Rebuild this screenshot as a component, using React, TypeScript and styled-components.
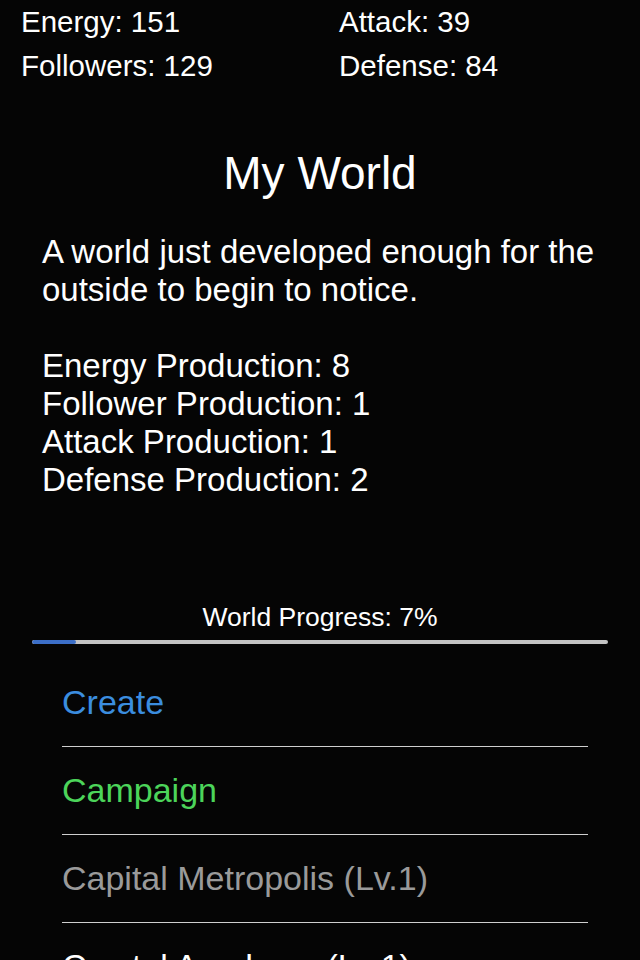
import React from "react";
import styled, { createGlobalStyle } from "styled-components";

const Global = createGlobalStyle`
  html, body {
    margin: 0;
    padding: 0;
    background: #050505;
  }
  body {
    font-family: "Liberation Sans", Arial, Helvetica, sans-serif;
    color: #ffffff;
    -webkit-font-smoothing: antialiased;
  }
`;

const Screen = styled.div`
  width: 640px;
  height: 960px;
  overflow: hidden;
  background: #050505;
  display: flex;
  flex-direction: column;
  & > * {
    flex-shrink: 0;
  }
`;

const StatsGrid = styled.div`
  display: grid;
  grid-template-columns: 318px 1fr;
  padding: 0 21px;
`;

const Stat = styled.div`
  font-size: 29.5px;
  line-height: 44px;
  color: #ffffff;
  white-space: nowrap;
`;

const Title = styled.h1`
  margin: 57px 0 0;
  font-size: 46px;
  font-weight: 400;
  line-height: 56px;
  text-align: center;
  color: #ffffff;
`;

const Body = styled.div`
  margin-top: 32px;
  padding: 0 24px 0 42px;
  font-size: 33px;
  line-height: 38px;
`;

const Paragraph = styled.p`
  margin: 0;
`;

const ProductionList = styled.div`
  margin-top: 38px;
  display: flex;
  flex-direction: column;
`;

const ProgressLabel = styled.div`
  margin-top: 103px;
  font-size: 26.5px;
  line-height: 30px;
  text-align: center;
`;

const Track = styled.div`
  margin: 8px 32px 0;
  height: 4px;
  border-radius: 2px;
  background: #c4c4c4;
  overflow: hidden;
`;

const Fill = styled.div`
  height: 100%;
  border-radius: 2px;
  background: #3c6fc8;
`;

const Menu = styled.div`
  margin-top: 15px;
  padding: 0 52px 0 62px;
  display: flex;
  flex-direction: column;
`;

const MenuRow = styled.div<{ $color: string; $last?: boolean }>`
  flex-shrink: 0;
  height: 87px;
  line-height: 87px;
  font-size: 34px;
  color: ${(p) => p.$color};
  border-bottom: ${(p) => (p.$last ? "none" : "1px solid #cfcfcf")};
  white-space: nowrap;
`;

const stats = [
  "Energy: 151",
  "Attack: 39",
  "Followers: 129",
  "Defense: 84",
];

const production = [
  "Energy Production: 8",
  "Follower Production: 1",
  "Attack Production: 1",
  "Defense Production: 2",
];

const menu = [
  { label: "Create", color: "#3b8ddf" },
  { label: "Campaign", color: "#4cd45a" },
  { label: "Capital Metropolis (Lv.1)", color: "#9a9a9a" },
  { label: "Crystal Academy (Lv.1)", color: "#ffffff" },
];

export default function App() {
  const progress = 7;
  return (
    <>
      <Global />
      <Screen>
        <StatsGrid>
          {stats.map((s) => (
            <Stat key={s}>{s}</Stat>
          ))}
        </StatsGrid>
        <Title>My World</Title>
        <Body>
          <Paragraph>
            A world just developed enough for the outside to begin to notice.
          </Paragraph>
          <ProductionList>
            {production.map((p) => (
              <div key={p}>{p}</div>
            ))}
          </ProductionList>
        </Body>
        <ProgressLabel>World Progress: {progress}%</ProgressLabel>
        <Track>
          <Fill style={{ width: `${progress + 0.6}%` }} />
        </Track>
        <Menu>
          {menu.map((m, i) => (
            <MenuRow key={m.label} $color={m.color} $last={i === menu.length - 1}>
              {m.label}
            </MenuRow>
          ))}
        </Menu>
      </Screen>
    </>
  );
}
